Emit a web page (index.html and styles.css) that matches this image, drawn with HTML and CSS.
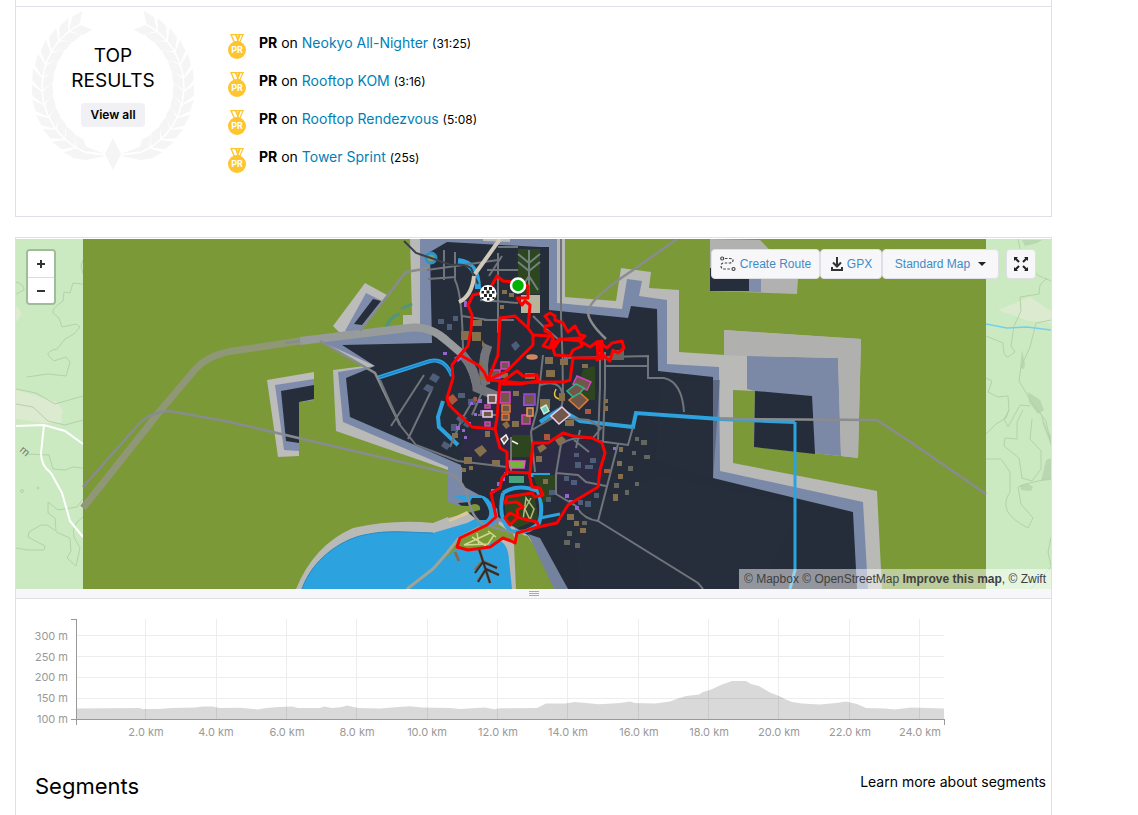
FILE: index.html
```
<!DOCTYPE html>
<html lang="en">
<head>
<meta charset="utf-8">
<title>Activity overview</title>
<link rel="stylesheet" href="styles.css">
</head>
<body>
<svg width="0" height="0" class="defs" aria-hidden="true">
  <defs>
    <symbol id="medal" viewBox="0 0 18 25">
      <path d="M2 0h14L12.500 8h-7z" fill="#fec52e"/>
      <path d="M4 1.300h3l2.200 5-1 1.200H6.800zM9 1.300h1.500l-.8 1.800zM12.500 1.300h1.600L11.500 7.500l-1-1z" fill="#fff"/>
      <circle cx="9" cy="16" r="9" fill="#fec52e"/>
      <text x="9" y="19" class="medal-text">PR</text>
    </symbol>
    <g id="leaf"><path d="M-71.500 8V-4L-81-13V-1zM-70 8V-4L-60-12V-1z"/></g>
    <g id="branch">
      <use href="#leaf" transform="rotate(-62)"/><use href="#leaf" transform="rotate(-51)"/><use href="#leaf" transform="rotate(-40)"/><use href="#leaf" transform="rotate(-29)"/><use href="#leaf" transform="rotate(-18)"/><use href="#leaf" transform="rotate(-7)"/><use href="#leaf" transform="rotate(4)"/><use href="#leaf" transform="rotate(15)"/><use href="#leaf" transform="rotate(26)"/><use href="#leaf" transform="rotate(37)"/><use href="#leaf" transform="rotate(48)"/><use href="#leaf" transform="rotate(59)"/>
      <path d="M-8 67L-31 58-28 64zM-8 69L-28 66-42 71-27 73z"/>
    </g>
  </defs>
</svg>
<main class="page">
  <section class="card results">
    <div class="laurel">
      <svg class="wreath" viewBox="-81 -77 162 160" aria-hidden="true" fill="#f5f5f5">
        <use href="#branch"/><use href="#branch" transform="scale(-1 1)"/>
        <path d="M0 51L8 67 0 83-8 67z"/>
      </svg>
      <div class="laurel-body">
        <h2>TOP<br>RESULTS</h2>
        <button type="button" class="view-all">View all</button>
      </div>
    </div>
    <ul class="pr-list">
      <li><svg class="medal"><use href="#medal"/></svg><p><b>PR</b> on <a href="#">Neokyo All-Nighter</a> <small>(31:25)</small></p></li>
      <li><svg class="medal"><use href="#medal"/></svg><p><b>PR</b> on <a href="#">Rooftop KOM</a> <small>(3:16)</small></p></li>
      <li><svg class="medal"><use href="#medal"/></svg><p><b>PR</b> on <a href="#">Rooftop Rendezvous</a> <small>(5:08)</small></p></li>
      <li><svg class="medal"><use href="#medal"/></svg><p><b>PR</b> on <a href="#">Tower Sprint</a> <small>(25s)</small></p></li>
    </ul>
  </section>

  <section class="card ride">
    <div class="map">
      <svg class="map-art" viewBox="16 239 1035 350" preserveAspectRatio="xMidYMid slice" role="img" aria-label="Route map">
        <rect x="16" y="239" width="1035" height="350" fill="#cbeac1"/>
        <g fill="#dcebd0">
          <path d="M16 390l18 5 24 8 5 8-2 12H45L16 419zM16 306q5 4 5 9l-5 7zM998 310l32-13 21 14v12l-22-2z"/>
        </g>
        <g fill="#b9d8b1"><path d="M1022 350l3 14-1 5-4-1zM1028 392l12 8 4 10-6 4-9-12zM1040 410l8 22 3 3v10l-8-20zM1046 460l5-2v22l-10 1zM1020 485l7-2 6 4-2 4-10-1zM1022 240h20l-5 3-12 3z"/></g>
        <g fill="none" stroke="#b3d2aa" stroke-width="1">
          <path d="M83 284l-10-1-3 10-6-1-1 9q-12 8-10 12l6 5 3 9 14-3 4 3-6 7-9 5-8 10q-10 2-9 6l6 6 12-4 4 5-4 14-18-2-21 3M83 396l-28 8-19-11-20-4M16 404l17 3 15 14 17 4 18-5M26 454l23 1 4 14 12 1 8-3 10 1M83 499l-6 8-19 3-10-8v11l7 5 1 13-9-6-6 0-12 7-1 5 17 9-1 4H27l-11-2M83 517q-12 8-9 20l6 11-4 18-9-8 4-7-1-13-14-6M16 282q8 2 8 8l-8 4M83 260l-2 6 2 8"/>
          <circle cx="22" cy="491" r="1.500"/><circle cx="38" cy="488" r="1"/>
          <path d="M1051 281l-14-6-9-16-8-10-2-10M1047 278l-7 7-1 9-19 3 1 14-7 15-3 20 4 6-7 5q-5 0-5-14l-17-7M1051 320l-15 3-6 24-9 20-2 14 12 20 15 20 5 24M986 378l6 3-4 11 10 5 10-1 1 14-5 9 4 8 12-22 10 1M986 434l10-10 10-6 3-8M1023 410l-6 12 0 17-12-1-1 8 15 12 3 20 10 3 9-12 0-18-11-12 2-20M986 459l15 0 9 13v20q-14 20 18 36l5-10-12-14-3-17 12-4 21-5M1051 567l-20 22M1051 537l-3 15 3 14"/>
        </g>
        <path d="M986 324l21 4 20-1 24 3" fill="none" stroke="#74cfee" stroke-width="1.500"/>
        <path d="M16 426l28-1 21 6 18 13M44 425l-3 28q0 13 10 20l11 20 8 28 13 16" fill="none" stroke="#fff" stroke-width="2"/>
        <text x="19" y="451" class="map-place" transform="rotate(40 19 451)">m</text>

        <path d="M83 239H986V589H83z" fill="#7b9937"/>
        <!-- outlying blocks -->
        <path d="M267 380l47-8v28l-15 2v54l-21 1zM365 283l22 12-27 36-21 1-6-6z" fill="#bcbcba"/>
        <path d="M275 385l39-6v21l-15 2v49l-15-1zM366 293l16 8-22 30h-15z" fill="#7f8cab"/>
        <path d="M281 391l33-6v14l-15 3v41l-13-2zM373 299l8 2-19 24-8-1z" fill="#262d3b"/>
        <path d="M710 239l50 1 38 39-1 15-87-3z" fill="#b1b1b0"/><path d="M710 268h51v24l-51-1z" fill="#7f8cab"/><path d="M710 268h39v23h-39z" fill="#262d3b"/>
        <!-- city walls -->
        <path d="M410 239H565V297L616 301 621 268 651 272 649 288 679 290V352L725 355 724 330 861 339 858 458 841 456 754 447 755 391 733 390V463L877 491 882 589H568L528 537 513 530 448 497V470L336 431 333 370 365 366 320 341 403 330V315H412z" fill="#b9b9b7"/>
        <path d="M747 356l91 2 3 98-87-9 1-56-8-2z" fill="#7b88a6"/><path d="M755 391l57 5 3 58-61-7z" fill="#252c3a"/>
        <path d="M724 330l137 9-3 119-17-2-3-98-91-2-23-1z" fill="#b0b0af"/>
        <path d="M420 239h137v64l65 6 5-30 15 2-3 15 28 4v64l52 3 1 104 143 31 5 87H568l-40-54-80-38v-30L343 422l-5-50 37-6-55-25 100-14z" fill="#7b89a9"/>
        <path d="M430 252l17-10 93 5h9v63l79 8 3-12 26 3 1 62 55 6v101l140 34 4 77H568l-40-54-30-18-15-20-22-12V465L350 417l-4-39 29-12-33-21 90-2z" fill="#262d3a"/>
        <path d="M661 475l140 30-40 84H580l-8-80zM720 380h-60l-4 80 57 20" fill="#293140" opacity=".35"/>
        <path d="M495 385h40l-3 85h-35l-38-20 25-35zM535 440l30-5 35 10 2 40-35 20-35-30z" fill="#2e2c4a" opacity=".6"/>
        <path d="M483 239h27v3l-27-1z" fill="#b9b9b7"/>
        <!-- water -->
        <path d="M296 589q18-44 57-61 40-9 80-5l20-8 28-9 9 12 25 10 2 61z" fill="#b9b9b7"/>
        <path d="M448 467h14v42l-14 6zM481 515l16-7 2 16-20 4z" fill="#7b89a9"/>
        <path d="M302 589C312 560 340 540 364 535S400 532 433 533L467 523 485 514 493 514 496 520 490 530 497 540Q508 542 509 560L512 589z" fill="#2ca3df"/>
        <path d="M302 589C312 560 340 540 364 535S400 532 433 533" fill="none" stroke="#238cc4"/>
        <path d="M452 495h28q10 2 13 12l2 12-25 4 10-8-8-10z" fill="#2ca3df"/>
        <path d="M458 503l12-1 2-4h10q12 15 4 22l-9 0-6-5z" fill="#262d3a"/>
        <path d="M448 502q8 4 20 4l6-2q7 0 6 6l-12 3-20 5z" fill="#7b9937"/>
        <path d="M448 520l19-9 2 3-19 8z" fill="#dcc89c"/>
        <path d="M514 544l13-9 27 54h-38z" fill="#7b9937"/><path d="M528 534l12 4 28 51h-14z" fill="#75829d"/>
        <path d="M444 560l12-20 24-12 18-4 15 10 4 10-12-7-17 7-8 5-25 1z" fill="#7b9937"/>
        <g fill="none" stroke="#2ca3df" stroke-width="4">
          <path d="M377 378l53-17q15-3 22 15M443 401l-5 16 1 10 19 18M530 475h20M540 422l20-13 20 12 53 6 3-14 84 6 75 3" />
          <path d="M795 422v148l-5 19M540 518l20-4" stroke-width="3"/>
          <path d="M458 261q20 2 20 28" stroke-width="6"/>
          <path d="M503 493q14-10 35-2 6 18 1 32-12 12-28 8-14-12-8-38"/>
        </g>
        <circle cx="431" cy="258" r="5" fill="#8b9b65" stroke="#2b93ca" stroke-width="3"/>
        <path d="M377 378l53-17q15-3 22 15" fill="none" stroke="#1b79c4" stroke-width="1"/>
        <path d="M385 331q4-15 15-17M401 309l11-5" stroke="#4f977c" stroke-width="3" fill="none"/>
        <!-- parks -->
        <path d="M518 249h22v45h-22zM583 369l12-3v34h-14l-4-10zM512 435h19v22h-19zM504 497l30-5 4 27-20 9-12-6zM533 475h25l-5 20-10 8z" fill="#2d461f"/>
        <path d="M521 295h19v18h-19z" fill="#b8b49c"/>
        <!-- roads -->
        <g fill="none" stroke="#8f9777" stroke-width="7"><path d="M83 508q40-50 77-97l33-39q15-19 47-22l60-9"/></g>
        <path d="M300 341l108-13q22-3 39 13l14 12q10 10 15 30" fill="none" stroke="#979b9b" stroke-width="8"/>
        <path d="M462 354q14 16 15 34l22 9M488 345q-8 20-2 40" fill="none" stroke="#73757b" stroke-width="9"/>
        <g fill="none" stroke="#898c8f" stroke-width="2.500">
          <path d="M83 487l54-61q12-14 33-15l60 11 218 51q14 4 20 25 4 20 15 26l30 9M720 419l157 1 35 23 58 40 16 11"/>
          <path d="M300 341l-15 2M360 331l46-59 24-4M677 239l-44 31q-44 29-45 42 0 10 18 27"/>
          <path d="M320 341l55 32 25 52"/>
        </g>
        <path d="M407 589l26-20 14-16 11-14 22-12" fill="none" stroke="#a1a398" stroke-width="3"/>
        <g fill="none" stroke="#70747b" stroke-width="2">
          <path d="M427 270l71-10M428 279l28-2M444 250v30M455 252v28q8 15 8 80M498 247h20M502 256l-13 20M487 270h31M498 253v80M480 300l38 3M484 320h30M462 316l26 4M561 239v78q2 40 2 80M533 316q12 13 25 23M564 358l84-2v22h16q18 4 20 34M600 352v35l-2 55M605 352v35l-2 55M605 366h44M380 380l20 45 16 20 42 16 49 6M408 439l24-50M391 426l33-51M475 397l-13 22-12 28M492 370l-20 45M543 355l-6 55-6 22 4 40M511 437v35M498 415h-20M633 427l-5 18-30-4M618 444l-20 77q-15-2-22-15l-20-12v-20l5-30q12-8 32-6l8-10-12-8-24-2M556 473l22 2 8 7 20 4M580 430l-4 18M574 440l15 12M598 521l100 62 5 6M540 385q26-8 22 20l-8 12-22 13"/>
        </g>
        <path d="M404 241l12 12 15 5 20 7q12-2 20 3l7 16" fill="none" stroke="#3a3f48" stroke-width="2"/>
        <path d="M500 239l-25 35M474 276q-2 20-15 26" fill="none" stroke="#d1cabb" stroke-width="4"/>
        <path d="M518 254l11 9 11-9M518 262l11 9 11-9M529 250v45M520 290l9-14 9 14" fill="none" stroke="#71837f" stroke-width="2"/>
        <path d="M464 545l26-12M472 537l14 9M477 533l2 12M488 531l8 6M464 545l24-1 6-9" fill="none" stroke="#d0d98e" stroke-width="1.500"/>
        <path d="M479 549l11 34M475 570l8-9 14 7M478 581l8-12 13 6M455 552l4 9" fill="none" stroke="#8a6a4c" stroke-width="3"/>
        <path d="M479 549l11 34M475 573l8-11 14 6M478 582l8-13 13 6" fill="none" stroke="#292e35" stroke-width="2"/>
        <!-- buildings -->
        <g fill="#85704d"><path d="M461 331h8v9h-8zM472 332h9v9h-9zM472 320h10v6h-10zM501 373h7v5h-7zM560 359h8v6h-8zM502 393h7v7h-7zM523 397h10v9h-10zM464 457h8v7h-8zM474 450l8-5 5 6-7 6zM492 460h8v6h-8zM540 399h10v10h-10zM559 393h6v8h-6zM537 447l6-3 4 4-7 5zM555 440l7-4 4 4-7 6zM536 456h6v6h-6zM543 479h5v5h-5zM619 447h4v5h-4zM617 461h5v5h-5zM618 474h5v5h-5zM613 494h5v7h-5zM567 514h7v6h-7zM574 521h5v5h-5zM580 528h6v5h-6zM604 399h4v4h-4zM604 406h4v5h-4zM582 364h6v4h-6zM502 424l5-3 3 5-4 3zM452 433h6v5h-6zM512 421h7v6h-7zM482 340l3 4-3 3zM480 375h6v4h-6zM545 357h8v7h-8zM546 370h9v7h-9zM525 373h10v6h-10zM480 361l4 4-3 4zM513 391h6v5h-6zM485 431h5v6h-5zM565 420h9v6h-9zM502 290h5v4h-5zM509 293h5v4h-5zM500 305h4v4h-4zM462 468h4v4h-4zM469 466h4v4h-4z"/></g>
        <g fill="#65665f"><path d="M641 440h6v5h-6zM644 455h6v4h-6zM628 466h5v5h-5zM635 437h4v4h-4zM632 451h4v4h-4zM635 482h4v4h-4zM625 490h4v5h-4zM614 483h5v5h-5zM564 540h6v5h-6zM575 543h5v5h-5zM567 531h5v5h-5zM582 521h5v4h-5zM612 350h12v10h-12z"/></g>
        <g fill="#4e5e78"><path d="M433 373l7 4-4 6-7-4zM427 384l7 3-4 6-7-4zM438 319h6v5h-6zM447 324h5v6h-5zM453 316h5v5h-5zM458 393h7v5h-7zM468 399h8v6h-8zM460 414l7 4-5 6-6-5zM451 424h6v7h-6zM564 476h5v5h-5zM571 480h6v5h-6zM575 462h6v6h-6zM585 465h8v4h-8zM590 458h6v5h-6zM574 453h5v4h-5zM549 490h6v5h-6zM585 501h6v6h-6zM594 493h5v5h-5zM511 345l5-4 4 5-5 5zM578 500h5v5h-5zM466 420l5 3-3 5-5-3zM444 441l7 4-4 5-6-4zM546 497h5v5h-5z"/></g>
        <path d="M478 399h4v4h-4zM480 410h3v4h-3zM470 402h3v3h-3zM454 358l6-4 3 4-5 4zM456 426h4v4h-4zM468 422h3v3h-3zM491 489h4v4h-4zM501 477h4v4h-4zM565 494h4v4h-4zM575 506h4v4h-4zM443 352h4v3h-4zM464 301h3v6h-3zM487 405h3v3h-3zM613 447h3v3h-3zM497 482h4v4h-4zM462 429h3v3h-3zM474 413h3v3h-3zM464 436h3v3h-3zM504 472h4v3h-4zM569 500h4v4h-4z" fill="#9567ce"/>
        <path d="M447 398l6-4 5 6-6 5zM544 434h6v6h-6zM585 409h6v5h-6zM604 469h6v4h-6zM474 397h3v4h-3z" fill="#ad583c"/>
        <g fill="#705749" stroke-width="1.500">
          <path d="M501 362h8v7h-8zM491 370h9v8h-9zM500 392h10v11h-10zM522 415h8v9h-8zM485 405h5v3h-5zM485 422h5v4h-5zM577 376l14 6-4 8-14-6z" stroke="#d941c5"/>
          <path d="M502 405h8v7h-8zM569 400l10-8 9 8-9 9zM502 414h7v6h-7z" stroke="#e27b36"/>
          <path d="M483 411h9v6h-9zM488 395h8v8h-8zM551 416l11-9 8 8-11 9z" stroke="#eccfee"/>
          <path d="M524 394h11v11h-11z" stroke="#9b48e4"/><path d="M527 408h6v8h-6z" stroke="#ec9a55"/>
          <path d="M567 391l9-7 8 4-4 5-7 4z" stroke="#30b58a"/>
          <path d="M541 408l5-3 3 6-5 3z" fill="#7fc8b2" stroke="#c2efdf"/>
          <path d="M556 389q-4 8 3 10" fill="none" stroke="#e5c441"/>
          <path d="M501 439l5-4 2 4-4 5zM512 441l6 3" stroke="#f4f2f7"/>
          <path d="M509 461h16l-1 7h-14z" fill="#78b43a" stroke="#e558c7"/><path d="M509 476h15v7h-15z" fill="#49a27b" stroke="none"/>
          <ellipse cx="532" cy="357" rx="5" ry="2" fill="#cf8559" stroke="#d78a5e"/>
        </g>
        <path d="M523 520l3-22 8 11-4 11-5-11 6-11" fill="none" stroke="#b8b883" stroke-width="1.500"/>
        <!-- ride track -->
        <g class="track">
          <path d="M488 293h-6l-9 2-5 10 4 10-1 15-3 16-8 9 18 10 6 7 4 8 12 1 20 2 20-1h24l6-2 3-22h30M460 355l-8 10 1 13-6 20 2 7 23 22 23 2 5 19 7 4v20l-5 6-2 10-9 5 5 24-9 8-27 13-3 9 11 3 22-3 13-9 8 3 4 2 2-10 21-6 19-4 11-18 30-18 2-17 5-17-3-10-10-5-19-2-10-3-15 10h-15l-3 30-23-1"/>
          <path d="M529 473l3 14 8 1 3 7-8 2-3-4-25 4-2 6 12-1 6 5-6 3 1 7-8 8-5-7 5-5 10 5 17 4 2 5M518 285l10 1v12h-11l5 7 3-4 5 4-2 23 5 7v10l-26 26-19 9M528 328l-13-12-15 2-2 37-10 25M488 293l4-8 5-9 6 5 10 1M500 381l-3 37-2 11M503 381l14-10 6 5 14-1 1 6-18 3H503"/>
          <path d="M533 335L550 336 543 346 550 348 553 338 550 333 545 331V326L552 325 545 316 550 313 555 316V320L563 323 568 332 575 326 580 335 585 336 580 341 560 339 552 345 555 355 570 356 573 350 582 346 580 341 590 347 597 342 598 356 602 359 600 343 607 348 612 343 622 341 624 348 618 353 613 350 610 361 603 355 597 360"/>
          <path d="M553 338L555 347 560 339M565 339l15-1M597 342l5-1v14l-4 1"/>
        </g>
        <circle cx="518" cy="285.500" r="7" fill="#00b300" stroke="#fff" stroke-width="2.500"/>
        <circle cx="488" cy="293.500" r="8.500" fill="#fff"/>
        <path d="M484 287h3v3h-3zM489 287h3v3h-3zM481.500 291h2.500v2.500h-2.500zM486.500 290.500h3v3h-3zM492 291h2.500v2.500h-2.500zM484 294h3v3h-3zM489 294h3v3h-3zM487 298h2.500v2.500h-2.500zM481.500 297h2v2h-2zM492.500 297h2v2h-2z" fill="#222"/>
      </svg>
      <div class="zoom">
        <button type="button" aria-label="Zoom in"><svg viewBox="0 0 8 8"><path d="M0 4h8M4 0v8"/></svg></button>
        <button type="button" aria-label="Zoom out"><svg viewBox="0 0 8 8"><path d="M0 4h8"/></svg></button>
      </div>
      <div class="map-tools">
        <button type="button" class="tool route"><svg width="16" height="16" viewBox="0 0 16 16" fill="none" stroke="#444" stroke-width="1.200"><circle cx="2.200" cy="2.500" r="1.500"/><circle cx="13.500" cy="13" r="1.500"/><path d="M5 2.500h5q3 0 3 2t-3 2.500H4Q1 7 1 10t3 3h7" stroke-dasharray="2.500 1.500"/></svg>Create Route</button>
        <button type="button" class="tool gpx"><svg width="14" height="16" viewBox="0 0 14 16" fill="none" stroke="#333" stroke-width="2"><path d="M7 1v9M3 6.500l4 4 4-4M2 11v3h10v-3"/></svg>GPX</button>
        <button type="button" class="tool style">Standard Map<svg width="8" height="4" viewBox="0 0 8 4"><path d="M0 0h8L4 4z" fill="#222"/></svg></button>
        <button type="button" class="tool full" aria-label="Full screen"><svg width="16" height="16" viewBox="0 0 16 16" fill="#222" stroke="#222" stroke-width="2"><path d="M2 2l4 4M14 2l-4 4M2 14l4-4M14 14l-4-4"/><path d="M1 1h4L1 5zM15 1v4l-4-4zM1 15v-4l4 4zM15 15h-4l4-4z" stroke="none"/></svg></button>
      </div>
      <p class="credit">© Mapbox © OpenStreetMap <b>Improve this map</b>, © Zwift</p>
    </div>
    <div class="grip"><span></span></div>
    <svg class="chart" viewBox="16 599 1035 150" preserveAspectRatio="xMinYMin meet" role="img" aria-label="Elevation profile">
      <g stroke="#ededed" shape-rendering="crispEdges"><path d="M77 635.500h867M77 656.500h867M77 677.500h867M77 698.500h867M145.500 619v100M216.500 619v100M286.500 619v100M356.500 619v100M427.500 619v100M497.500 619v100M567.500 619v100M638.500 619v100M708.500 619v100M778.500 619v100M849.500 619v100M919.500 619v100"/></g>
      <path d="M77 719V708.500L140 708 142 709 158 709 172 708 195 707.500 203 706.500H212L220 708 240 707.700 258 709.500 266 708 278 707 292 706.500 298 708H320L324 706.500 332 708 342 707 347 705.500 358 708 380 708.500 398 707 410 706.300 422 707.500 450 708 460 709 485 707.500 494 709.300 500 708.200 537 708 546 703.500H565L575 702 599 704.200 620 703 630 701.500 635 703 655 703.500 670 701.500 678 698.500 686 696 699 694.500 703 692 710 690 722 684.500 732 681H746L751 684 759 686 770 692.500 779 696 786 699.500 792 702 802 703.500 820 704.500 836 703 846 701.500 857 704 866 708 885 708.500 895 709.500 911 707.500 944 708.500V719z" fill="#000" opacity=".15"/>
      <path d="M71 619.500h5.500V725M71 719.500h873.500v5.500" fill="none" stroke="#999" shape-rendering="crispEdges"/>
      <g class="axis-y"><text x="68" y="640">300 m</text><text x="68" y="661">250 m</text><text x="68" y="681">200 m</text><text x="68" y="702">150 m</text><text x="68" y="723">100 m</text></g>
      <g class="axis-x"><text x="146" y="736">2.0 km</text><text x="216" y="736">4.0 km</text><text x="287" y="736">6.0 km</text><text x="357" y="736">8.0 km</text><text x="427" y="736">10.0 km</text><text x="498" y="736">12.0 km</text><text x="568" y="736">14.0 km</text><text x="639" y="736">16.0 km</text><text x="709" y="736">18.0 km</text><text x="779" y="736">20.0 km</text><text x="850" y="736">22.0 km</text><text x="920" y="736">24.0 km</text></g>
    </svg>
    <header class="segments">
      <h2>Segments</h2>
      <a href="#">Learn more about segments</a>
    </header>
  </section>
</main>
</body>
</html>
```

FILE: styles.css
```
* { box-sizing: border-box; }
body {
  margin: 0;
  background: #fff;
  color: #000;
  font-family: Inter, "Liberation Sans", sans-serif;
  font-size: 14px;
  overflow: hidden;
}
h2, p, ul { margin: 0; padding: 0; font-weight: 400; }
button { font: inherit; cursor: pointer; }
a { text-decoration: none; color: inherit; }
.defs { position: absolute; }
.page { margin: 0 86px 0 15px; }
.card { border: 1px solid #dfdfe8; }

.results {
  display: flex;
  margin-bottom: 20px;
  padding-bottom: 40px;
  border-top: 0;
  background: linear-gradient(#dfdfe8, #dfdfe8) 0 6px / 100% 1px no-repeat;
}
.laurel {
  display: grid;
  width: 162px;
  height: 160px;
  margin: 10px 34px 4px 16px;
}
.laurel > * { grid-area: 1 / 1; }
.wreath { width: 162px; height: 160px; }
.laurel-body {
  display: flex;
  flex-direction: column;
  align-items: center;
  padding-top: 33px;
}
.laurel h2 { font-size: 19px; line-height: 25px; text-align: center; }
.view-all {
  height: 24px;
  margin-top: 10px;
  padding: 0 9px 2px;
  border: 0;
  border-radius: 4px;
  background: #f0f0f5;
  color: #000;
  font-size: 12px;
  font-weight: 600;
}
.pr-list { list-style: none; padding-top: 24px; }
.pr-list li {
  display: flex;
  gap: 13px;
  height: 38px;
  padding-top: 10px;
}
.medal { width: 18px; height: 25px; }
.medal-text {
  font: 700 9px Roboto, sans-serif;
  fill: #fff;
  text-anchor: middle;
}
.pr-list p { line-height: 18px; }
.pr-list b { font-weight: 700; }
.pr-list a { color: #007fb6; }
.pr-list small { font-size: 12px; }

.ride { padding-top: 1px; border-bottom: 0; min-height: 600px; }
.map { position: relative; height: 350px; overflow: hidden; }
.map-art { display: block; width: 100%; height: 100%; }
.map-place { font: 11px "Liberation Sans", sans-serif; fill: #70806c; }
.track path {
  fill: none;
  stroke: #f00;
  stroke-width: 3;
  stroke-linejoin: round;
  stroke-linecap: round;
}
.zoom {
  position: absolute;
  top: 10px;
  left: 10px;
  width: 30px;
  border: 2px solid #a2bb9a;
  border-radius: 4px;
  overflow: hidden;
}
.zoom button {
  display: flex;
  align-items: center;
  justify-content: center;
  width: 100%;
  height: 26px;
  padding: 0;
  border: 0;
  background: #fff;
}
.zoom button + button { border-top: 1px solid #ddd; }
.zoom svg { width: 8px; height: 8px; stroke: #333; stroke-width: 2; }
.map-tools {
  position: absolute;
  top: 10px;
  right: 15px;
  display: flex;
  font-family: "Liberation Sans", Arial, sans-serif;
  font-size: 12px;
}
.tool {
  display: flex;
  align-items: center;
  justify-content: center;
  height: 30px;
  padding: 0;
  border: 1px solid #dfdfe8;
  border-radius: 4px;
  background: #f7f7fa;
  color: #3d8cc4;
}
.route { width: 109px; gap: 4px; }
.gpx { width: 62px; gap: 3px; }
.style { width: 117px; gap: 8px; }
.full { width: 30px; margin-left: 7px; }
.credit {
  position: absolute;
  right: 0;
  bottom: 0;
  padding: 0 5px;
  background: rgba(255, 255, 255, .5);
  color: #404040;
  font: 12px/20px "Liberation Sans", Arial, sans-serif;
}
.grip {
  display: flex;
  align-items: center;
  justify-content: center;
  height: 10px;
  border-bottom: 1px solid #dfdfe8;
  background: #f7f7fa;
}
.grip span {
  width: 10px;
  height: 5px;
  background: repeating-linear-gradient(#aaa 0 1px, transparent 1px 2px);
}
.chart { display: block; width: 100%; max-width: 1035px; }
.chart text { font: 11px Inter, sans-serif; fill: #999; }
.axis-y { text-anchor: end; }
.axis-x { text-anchor: middle; }
.segments {
  display: flex;
  justify-content: space-between;
  padding: 20px 5px 0 19px;
}
.segments h2 { font-size: 22px; line-height: 34px; }
.segments a { line-height: 25px; }
```
